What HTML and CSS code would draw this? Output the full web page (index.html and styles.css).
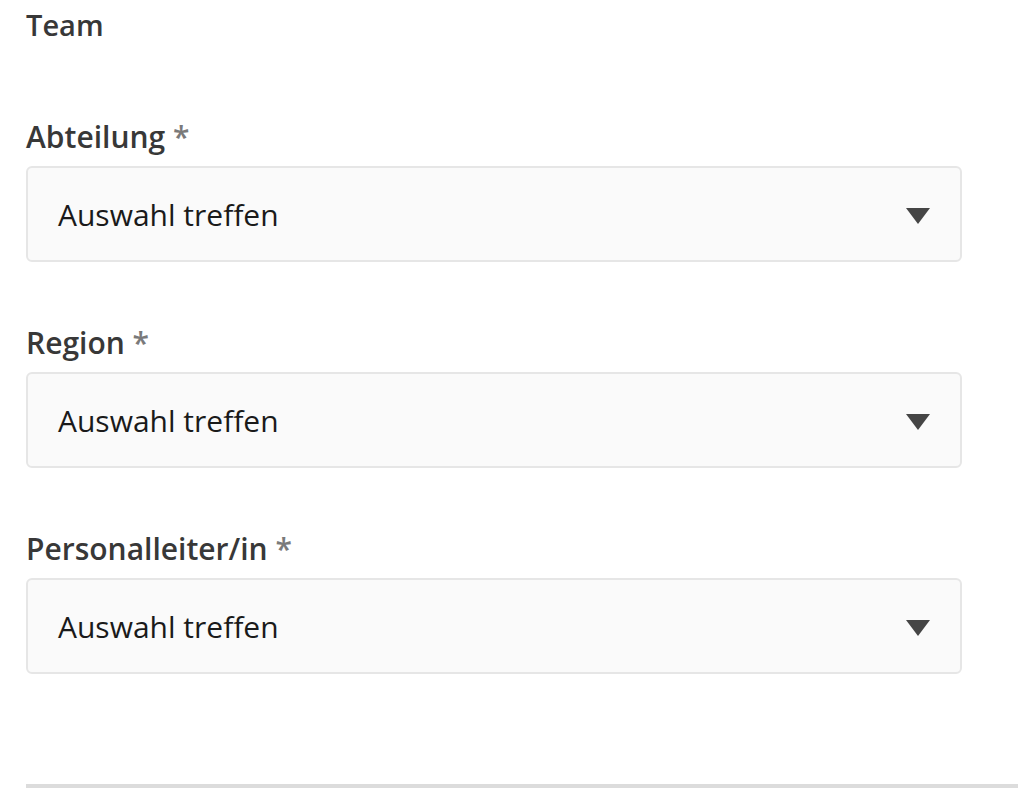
FILE: index.html
```html
<!DOCTYPE html>
<html lang="de">
<head>
<meta charset="utf-8">
<title>Team</title>
<link rel="stylesheet" href="styles.css">
</head>
<body>
<main class="form">
  <h2 class="section-title">Team</h2>
  <div class="field">
    <label class="field-label">Abteilung <span class="req">*</span></label>
    <div class="select">
      <span class="select-value">Auswahl treffen</span>
      <svg class="caret" width="24" height="16" viewBox="0 0 24 16"><path d="M0 0H24L12 16Z" fill="#454545"/></svg>
    </div>
  </div>
  <div class="field">
    <label class="field-label">Region <span class="req">*</span></label>
    <div class="select">
      <span class="select-value">Auswahl treffen</span>
      <svg class="caret" width="24" height="16" viewBox="0 0 24 16"><path d="M0 0H24L12 16Z" fill="#454545"/></svg>
    </div>
  </div>
  <div class="field">
    <label class="field-label">Personalleiter/in <span class="req">*</span></label>
    <div class="select">
      <span class="select-value">Auswahl treffen</span>
      <svg class="caret" width="24" height="16" viewBox="0 0 24 16"><path d="M0 0H24L12 16Z" fill="#454545"/></svg>
    </div>
  </div>
  <hr class="divider">
</main>
</body>
</html>
```
FILE: styles.css
```css
html, body {
  margin: 0;
  padding: 0;
  background: #ffffff;
}
body {
  font-family: "Open Sans", "Noto Sans", sans-serif;
  color: #383838;
}
.form {
  display: flex;
  flex-direction: column;
  padding: 5px 0 0 26px;
}
.section-title {
  margin: 0;
  font-size: 29px;
  line-height: 40px;
  font-weight: 600;
  color: #383838;
}
.field {
  display: flex;
  flex-direction: column;
  width: 936px;
  margin-top: 72px;
}
.field + .field {
  margin-top: 61px;
}
.field-label {
  font-size: 30px;
  line-height: 40px;
  font-weight: 600;
  color: #383838;
  margin-bottom: 9px;
}
.req {
  color: #7a7a7a;
  font-weight: 600;
}
.select {
  box-sizing: border-box;
  height: 96px;
  display: flex;
  align-items: center;
  justify-content: space-between;
  padding: 0 30px 0 30px;
  background: #fafafa;
  border: 2px solid #e6e6e6;
  border-radius: 6px;
}
.select-value {
  font-size: 30px;
  line-height: 40px;
  font-weight: 400;
  color: #1a1a1a;
  padding-top: 2px;
}
.caret {
  display: block;
  margin-top: 4px;
}
.divider {
  margin: 110px 0 0 0;
  border: 0;
  height: 4px;
  background: #dcdcdc;
  width: 992px;
}
```
